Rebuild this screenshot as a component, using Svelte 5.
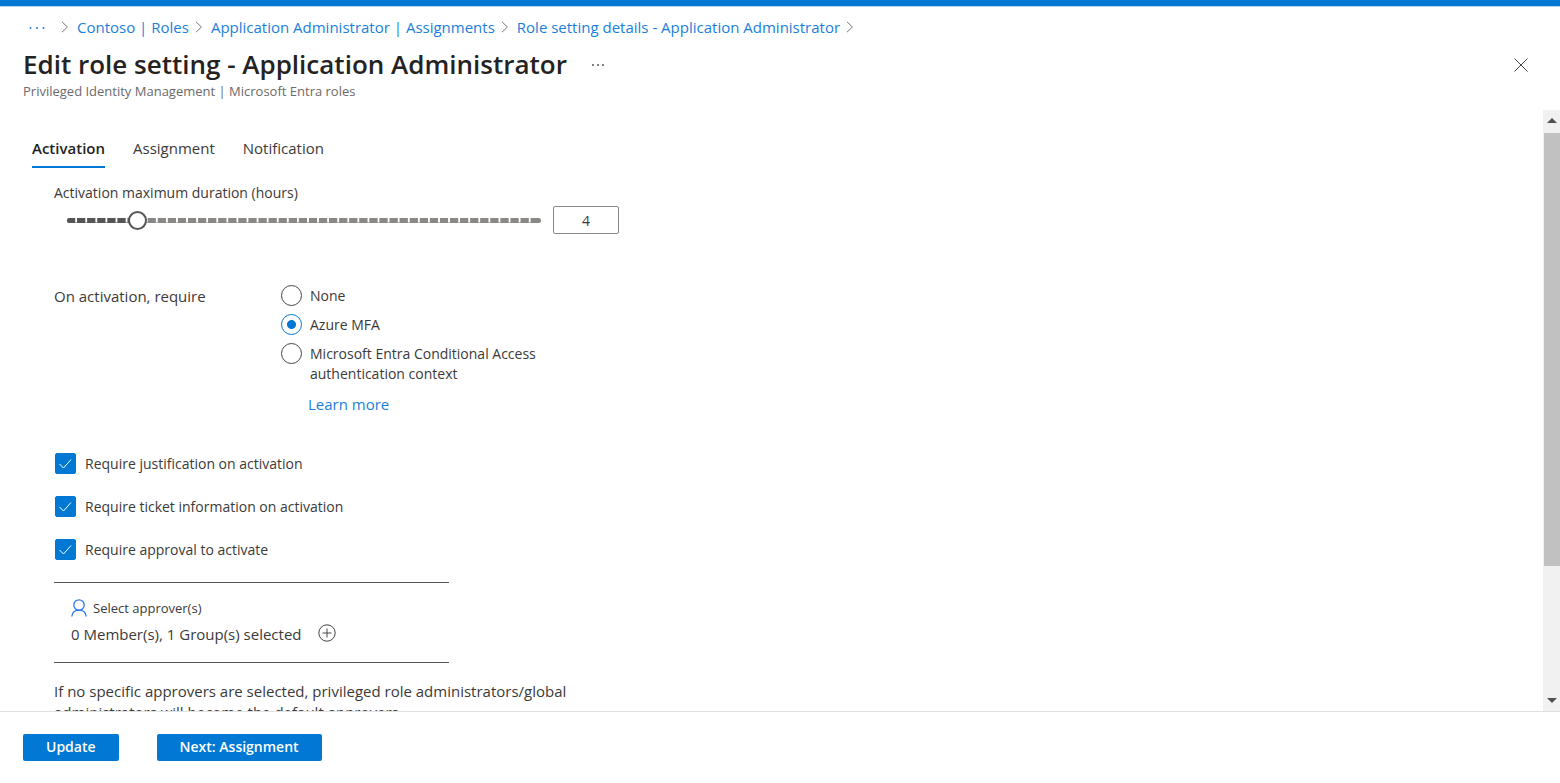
<script>
  const crumbs = [
    'Contoso | Roles',
    'Application Administrator | Assignments',
    'Role setting details - Application Administrator',
  ];
  const tabs = ['Activation', 'Assignment', 'Notification'];
  const requirements = [
    'None',
    'Azure MFA',
    'Microsoft Entra Conditional Access authentication context',
  ];

  const minHours = 0.5;
  const maxHours = 24;

  let activeTab = $state('Activation');
  let hours = $state(4);
  let requirement = $state('Azure MFA');
  let checks = $state([
    { label: 'Require justification on activation', on: true },
    { label: 'Require ticket information on activation', on: true },
    { label: 'Require approval to activate', on: true },
  ]);
  let filled = $derived(((hours - minHours) / (maxHours - minHours)) * 100);
</script>

{#snippet chevron()}
  <svg class="chevron" viewBox="0 0 8 12" aria-hidden="true"><path d="M1 .8 6.4 6 1 11.2" /></svg>
{/snippet}

<div class="page">
  <div class="topbar"></div>

  <header>
    <nav class="crumbs" aria-label="Breadcrumb">
      <button class="more" aria-label="More breadcrumbs">
        <svg viewBox="0 0 16 4" width="16" height="4"><circle cx="1.5" cy="3" r="1" /><circle cx="8" cy="3" r="1" /><circle cx="14.5" cy="3" r="1" /></svg>
      </button>
      {@render chevron()}
      {#each crumbs as crumb}
        <a href="#top">{crumb}</a>
        {@render chevron()}
      {/each}
    </nav>
    <div class="title">
      <h1>Edit role setting - Application Administrator</h1>
      <button class="options" aria-label="More options">
        <svg viewBox="0 0 14 4" width="14" height="4"><circle cx="2" cy="2" r="1" /><circle cx="7" cy="2" r="1" /><circle cx="12" cy="2" r="1" /></svg>
      </button>
      <button class="close" aria-label="Close">
        <svg viewBox="0 0 14 14" width="14" height="14"><path d="M.5.5l13 13M13.5.5l-13 13" /></svg>
      </button>
    </div>
    <p class="subtitle">Privileged Identity Management | Microsoft Entra roles</p>
  </header>

  <div class="body">
    <main>
      <div class="tabs" role="tablist">
        {#each tabs as tab}
          <button role="tab" class:active={activeTab === tab} aria-selected={activeTab === tab} onclick={() => (activeTab = tab)}>{tab}</button>
        {/each}
      </div>

      <div class="panel">
        <label for="duration" class="duration-label">Activation maximum duration (hours)</label>
        <div class="duration">
          <div class="slider">
            <div class="track"><div class="fill" style="width: {filled}%"></div></div>
            <input id="duration" type="range" min={minHours} max={maxHours} step="0.5" bind:value={hours} />
          </div>
          <input class="hours" type="text" aria-label="Hours" bind:value={hours} />
        </div>

        <div class="require">
          <span id="require-label">On activation, require</span>
          <div class="radios" role="radiogroup" aria-labelledby="require-label">
            {#each requirements as item}
              <label><input type="radio" name="requirement" value={item} bind:group={requirement} /><span>{item}</span></label>
            {/each}
            <a href="#learn">Learn more</a>
          </div>
        </div>

        <div class="checks">
          {#each checks as check}
            <label>
              <input type="checkbox" bind:checked={check.on} />
              <svg viewBox="0 0 21 21" aria-hidden="true"><path d="M4.500 11l4 4 7.500-8.500" /></svg>
              <span>{check.label}</span>
            </label>
          {/each}
        </div>

        <div class="approvers">
          <div class="select">
            <svg viewBox="0 0 16 18" width="16" height="18" aria-hidden="true"><circle cx="8" cy="6" r="5.200" /><path d="M.8 17.500C1.200 13.500 4 11.200 8 11.200s6.800 2.300 7.200 6.300" /></svg>
            <span>Select approver(s)</span>
          </div>
          <div class="selected">
            <span>0 Member(s), 1 Group(s) selected</span>
            <button aria-label="Add approvers">
              <svg viewBox="0 0 18 18" width="18" height="18"><circle cx="9" cy="9" r="8.200" /><path d="M9 4.500v9M4.500 9h9" /></svg>
            </button>
          </div>
        </div>

        <p class="note">If no specific approvers are selected, privileged role administrators/global administrators will become the default approvers.</p>
      </div>
    </main>

    <div class="scrollbar" aria-hidden="true">
      <svg viewBox="0 0 10 5" width="10" height="5"><path d="M0 5 5 0l5 5z" /></svg>
      <div class="rail"><div class="thumb"></div></div>
      <svg viewBox="0 0 10 5" width="10" height="5"><path d="M0 0h10L5 5z" /></svg>
    </div>
  </div>

  <footer>
    <button>Update</button>
    <button>Next: Assignment</button>
  </footer>
</div>

<style>
  :global(body) {
    margin: 0;
    background: #fff;
  }
  .page {
    display: flex;
    flex-direction: column;
    height: 100vh;
    font: 15px/20px 'Open Sans', 'Noto Sans', sans-serif;
    color: #3b3a39;
  }
  button,
  input {
    font: inherit;
    color: inherit;
  }
  button {
    padding: 0;
    border: 0;
    background: none;
    cursor: pointer;
  }
  svg {
    display: block;
    flex: none;
  }
  a {
    color: #1a7fdb;
    text-decoration: none;
  }
  .topbar {
    flex: none;
    height: 6px;
    background: #0078d4;
    border-bottom: 1px solid #b3d6f2;
  }
  header {
    flex: none;
    height: 103px;
  }
  .crumbs {
    display: flex;
    align-items: center;
    padding: 10px 0 0 29px;
  }
  .crumbs a {
    margin: 0 6px 0 8px;
  }
  .more {
    margin-right: 16px;
    fill: #1a7fdb;
  }
  .chevron {
    width: 8px;
    height: 12px;
    fill: none;
    stroke: #767676;
  }
  .title {
    display: flex;
    align-items: center;
    padding: 8px 32px 0 23px;
  }
  h1 {
    margin: 0;
    font-size: 26px;
    line-height: 39px;
    font-weight: 600;
    color: #242322;
  }
  .options {
    margin-left: 24px;
    fill: #555;
  }
  .close {
    margin-left: auto;
    stroke: #444;
  }
  .subtitle {
    margin: 0;
    padding: 0 23px;
    font-size: 13px;
    line-height: 14px;
    color: #6b6a69;
  }
  .body {
    flex: 1;
    min-height: 0;
    display: flex;
  }
  main {
    flex: 1;
    overflow-y: auto;
    scrollbar-width: none;
    padding: 26px 32px 0;
  }
  .tabs {
    display: flex;
    gap: 28px;
  }
  .tabs button {
    padding: 2px 0 8px;
    border-bottom: 2px solid transparent;
  }
  .tabs .active {
    font-weight: 600;
    color: #242322;
    border-color: #0078d4;
  }
  .panel {
    padding: 15px 22px 0;
  }
  .duration-label,
  .radios label,
  .checks label,
  footer button {
    font-size: 14px;
  }
  .duration-label {
    display: block;
  }
  .duration {
    display: flex;
    align-items: center;
    gap: 2px;
    margin-top: 3px;
  }
  .slider {
    display: grid;
    align-items: center;
    width: 494px;
    margin-left: 3px;
  }
  .track,
  .slider input {
    grid-area: 1 / 1;
  }
  .track {
    position: relative;
    height: 5px;
    margin: 0 10px;
    border-radius: 3px;
    background: #8a8886;
    overflow: hidden;
  }
  .fill {
    height: 100%;
    background: #555;
  }
  .track::after {
    content: '';
    position: absolute;
    inset: 0;
    background: linear-gradient(to left, #fff 2px, transparent 2px) 0 0 / calc(100% / 47) 100%;
    clip-path: inset(0 3px 0 0);
  }
  .slider input {
    position: relative;
    appearance: none;
    width: 100%;
    height: 20px;
    margin: 0;
    background: none;
  }
  .slider input::-webkit-slider-thumb {
    appearance: none;
    box-sizing: border-box;
    width: 19px;
    height: 19px;
    border: 2px solid #555;
    border-radius: 50%;
    background: #fff;
  }
  .hours {
    box-sizing: border-box;
    width: 66px;
    height: 28px;
    padding: 0;
    border: 1px solid #8a8886;
    border-radius: 2px;
    font-size: 14px;
    text-align: center;
  }
  .require {
    display: flex;
    margin-top: 52px;
  }
  .require > span {
    width: 226px;
  }
  .radios {
    width: 290px;
  }
  .radios label {
    display: flex;
    gap: 8px;
    margin-bottom: 9px;
  }
  .radios input {
    appearance: none;
    flex: none;
    box-sizing: border-box;
    width: 21px;
    height: 21px;
    margin: -1px 0 0 1px;
    border: 1px solid #484644;
    border-radius: 50%;
  }
  .radios input:checked {
    border-color: #0078d4;
    background: radial-gradient(circle, #0078d4 4px, transparent 5px);
  }
  .radios a {
    display: block;
    margin: 10px 0 0 28px;
  }
  .checks {
    display: grid;
    gap: 22px;
    margin: 39px 0 22px 1px;
  }
  .checks label {
    display: grid;
    grid-template-columns: 21px auto;
    column-gap: 9px;
    align-items: center;
    justify-content: start;
  }
  .checks input {
    grid-area: 1 / 1;
    appearance: none;
    box-sizing: border-box;
    width: 21px;
    height: 21px;
    margin: 0;
    border: 1px solid #484644;
    border-radius: 2px;
  }
  .checks input:checked {
    border-color: #0078d4;
    background: #0078d4;
  }
  .checks svg {
    grid-area: 1 / 1;
    width: 21px;
    height: 21px;
    z-index: 1;
    fill: none;
    stroke: #fff;
    pointer-events: none;
  }
  .approvers {
    width: 378px;
    padding: 15px 0 18px 17px;
    border: solid #555;
    border-width: 1px 0;
  }
  .select {
    display: flex;
    align-items: center;
    gap: 6px;
    font-size: 13px;
  }
  .select svg {
    fill: none;
    stroke: #2b7bea;
    stroke-width: 1.3;
  }
  .selected {
    display: flex;
    align-items: flex-start;
    gap: 16px;
    padding-top: 6px;
  }
  .selected svg {
    fill: none;
    stroke: #484644;
  }
  .note {
    width: 530px;
    margin: 18px 0 0;
    line-height: 21px;
  }
  .scrollbar {
    flex: none;
    display: flex;
    flex-direction: column;
    align-items: center;
    gap: 10px;
    width: 17px;
    box-sizing: border-box;
    padding: 8px 0 8px;
    background: #f1f1f1;
  }
  .scrollbar svg {
    fill: #505050;
  }
  .rail {
    flex: 1;
    align-self: stretch;
    padding-left: 1px;
  }
  .thumb {
    height: 78%;
    background: #c1c1c1;
  }
  footer {
    flex: none;
    display: flex;
    gap: 38px;
    padding: 22px 23px;
    border-top: 1px solid #e1e1e1;
  }
  footer button {
    padding: 3px 23px 4px;
    border-radius: 2px;
    background: #0078d4;
    color: #fff;
    font-weight: 600;
  }
</style>
